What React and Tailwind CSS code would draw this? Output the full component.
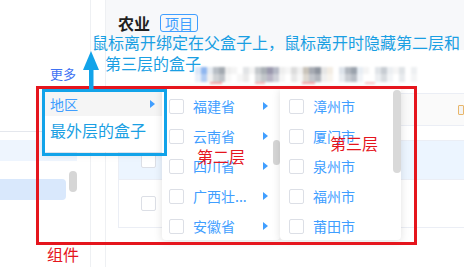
import React from "react";

const PROVINCES = ["福建省", "云南省", "四川省", "广西壮...", "安徽省"];
const CITIES = ["漳州市", "厦门市", "泉州市", "福州市", "莆田市"];

// blurred strip under the title
const MOSAIC_TOP = [
  "bg-[#dbe7f8]", "bg-[#8fb6ef]", "bg-[#e6ebf1]", "bg-[#b8bec5]", "bg-[#a3a9b0]", "bg-[#eeeeee]",
  "bg-[#f4f4f4]", "bg-[#ffffff]", "bg-[#e2e4e6]", "bg-[#f4f4f4]", "bg-[#c4c8cc]", "bg-[#aab0b6]",
  "bg-[#9a98ad]", "bg-[#b5b9c6]", "bg-[#eeeeee]", "bg-[#f6f6f6]", "bg-[#dcdcdc]", "bg-[#f0f0f0]",
  "bg-[#c9c3ba]", "bg-[#a6aab2]", "bg-[#8e949e]", "bg-[#e6e6e6]", "bg-[#f3ede4]", "bg-[#ffffff]",
  "bg-[#dde3ea]", "bg-[#b0b6be]", "bg-[#9aa2ac]", "bg-[#e8eef4]", "bg-[#f4f4f4]", "bg-[#ffffff]",
  "bg-[#e0e4e8]", "bg-[#c7ccd2]", "bg-[#eceff2]", "bg-[#f5f5f5]", "bg-[#dfe3e6]", "bg-[#ffffff]",
  "bg-[#eef0f2]",
];
const MOSAIC_BOTTOM = [
  "bg-[#e9f0fa]", "bg-[#b3cdf3]", "bg-[#f1f1f1]", "bg-[#cfd2d5]", "bg-[#bfc3c8]", "bg-[#f7f7f7]",
  "bg-[#ffffff]", "bg-[#f6f6f6]", "bg-[#ebebeb]", "bg-[#ffffff]", "bg-[#d8dadc]", "bg-[#c2c6ca]",
  "bg-[#b9b6c6]", "bg-[#cfd1d9]", "bg-[#f6f6f6]", "bg-[#ffffff]", "bg-[#e8e8e8]", "bg-[#f7f7f7]",
  "bg-[#ddd8d0]", "bg-[#c3c6cc]", "bg-[#b2b6bd]", "bg-[#f0f0f0]", "bg-[#f8f4ee]", "bg-[#ffffff]",
  "bg-[#e9edf1]", "bg-[#c9cdd3]", "bg-[#b8bec6]", "bg-[#f0f3f7]", "bg-[#ffffff]", "bg-[#ffffff]",
  "bg-[#eceff2]", "bg-[#d8dce0]", "bg-[#f3f5f7]", "bg-[#ffffff]", "bg-[#e8ebee]", "bg-[#ffffff]",
  "bg-[#f4f5f6]",
];

function Caret() {
  return (
    <svg width="5" height="8" viewBox="0 0 5 8" className="shrink-0">
      <path d="M0 0 L5 4 L0 8 Z" fill="#409eff" />
    </svg>
  );
}

function Box() {
  return <span className="h-[15px] w-[15px] shrink-0 rounded-[2px] border border-[#dcdfe6] bg-white" />;
}

export default function App() {
  return (
    <div className="relative h-[267px] w-[464px] overflow-hidden bg-white font-['Noto_Sans_CJK_SC','Noto_Sans',sans-serif]">
      {/* page underneath */}
      <div className="flex h-full">
        <aside className="relative w-[91px] shrink-0 border-r border-[#eef0f3]">
          <div className="h-[132px] border-b border-[#e4e7ed] pl-[50px] pt-[67px] text-[13px] leading-none text-[#3f72f3]">
            更多
          </div>
          <div className="mt-[8px] h-[21px] w-[77px] bg-[#eef5fe]" />
          <div className="mt-[18px] h-[21px] w-[66px] rounded-r-[4px] bg-[#d9e8fc]" />
          <div className="absolute left-[69px] top-[171px] h-[21px] w-[8px] rounded-full bg-[#d6d6d6]" />
        </aside>
        <div className="w-[15px] shrink-0 border-r border-[#eef0f3]" />

        <main className="min-w-0 flex-1">
          <div className="flex h-[50px] items-start gap-[10px] bg-[#f7f8fa] pl-[12px] pt-[14px]">
            <span className="text-[16px] font-bold leading-[18px] text-[#1f1f1f]">农业</span>
            <span className="h-[18px] rounded-[3px] border border-[#409eff] px-[4px] text-[14px] leading-[16px] text-[#409eff]">
              项目
            </span>
          </div>

          <div className="h-[43px] pl-[89px] pt-[17px]">
            <div className="blur-[1px]">
              <div className="flex">
                {MOSAIC_TOP.map((c, i) => (
                  <span key={i} className={`h-[7px] w-[6px] ${c}`} />
                ))}
              </div>
              <div className="flex">
                {MOSAIC_BOTTOM.map((c, i) => (
                  <span key={i} className={`h-[8px] w-[6px] ${c}`} />
                ))}
              </div>
              <div className="flex h-[2px]">
                <span className="ml-[15px] w-[12px] bg-[#f3a5a8]" />
                <span className="ml-[33px] w-[10px] bg-[#f6b9bb]" />
                <span className="ml-[37px] w-[13px] bg-[#f3a5a8]" />
                <span className="ml-[50px] w-[10px] bg-[#f6c4c5]" />
              </div>
            </div>
          </div>

          <div className="ml-[12px] border-l border-[#ebeef5]">
            <div className="flex h-[33px] items-center border-y border-[#ebeef5] bg-[#fafafa] pl-[339px]">
              <span className="h-[10px] w-[10px] rounded-[1px] border border-[#e8b66a] bg-[#f3f3f3]" />
            </div>
            <div className="h-[15px] border-b border-[#ebeef5]" />
            <div className="flex h-[39px] items-center border-b border-[#ebeef5] bg-[#ecf5ff] pl-[22px]">
              <Box />
            </div>
            <div className="flex h-[48px] items-center border-b border-[#ebeef5] pl-[22px]">
              <Box />
            </div>
          </div>
        </main>
      </div>

      {/* cascader panels */}
      <div className="absolute left-[44px] top-[88px] flex items-start">
        <div className="mt-[3px] h-[61px] w-[118px] bg-white shadow-[0_2px_8px_rgba(0,0,0,0.12)]">
          <div className="flex h-[25px] items-center justify-between bg-[#f5f5f5] pl-[6px] pr-[7px] text-[14px] leading-none text-[#409eff]">
            地区
            <Caret />
          </div>
        </div>
        <div className="relative h-[152px] w-[118px] rounded-b-[4px] bg-white pt-[3px] shadow-[0_2px_8px_rgba(0,0,0,0.12)]">
          {PROVINCES.map((p) => (
            <div key={p} className="flex h-[30px] items-center pl-[7px] pr-[12px]">
              <Box />
              <span className="ml-[9px] flex-1 text-[14px] leading-none text-[#409eff]">{p}</span>
              <Caret />
            </div>
          ))}
          <div className="absolute right-0 top-[52px] h-[25px] w-[7px] rounded-full bg-[#d6d6d6]" />
        </div>
        <div className="relative h-[152px] w-[121px] rounded-b-[4px] bg-white pt-[3px] shadow-[0_2px_8px_rgba(0,0,0,0.12)]">
          {CITIES.map((c) => (
            <div key={c} className="flex h-[30px] items-center pl-[9px]">
              <Box />
              <span className="ml-[9px] text-[14px] leading-none text-[#409eff]">{c}</span>
            </div>
          ))}
          <div className="absolute right-0 top-[2px] h-[83px] w-[8px] rounded-full bg-[#d9d9d9]" />
        </div>
      </div>

      {/* annotations */}
      <div className="absolute left-[36px] top-[86px] h-[159px] w-[381px] border-[3px] border-[#e5151d]" />
      <div className="absolute left-[42px] top-[89px] h-[67px] w-[125px] border-[3px] border-[#12a3e9]" />
      <svg className="absolute left-[83px] top-[51px]" width="16" height="40" viewBox="0 0 16 40">
        <path d="M8 0 L16 19 L0 19 Z" fill="#12a3e9" />
        <rect x="6" y="17" width="4.5" height="23" fill="#12a3e9" />
      </svg>

      <div className="absolute left-[92px] top-[34px] whitespace-nowrap text-[16px] leading-none text-[#1a9fe3]">
        鼠标离开绑定在父盒子上，鼠标离开时隐藏第二层和
      </div>
      <div className="absolute left-[105px] top-[55px] whitespace-nowrap text-[16px] leading-none text-[#1a9fe3]">
        第三层的盒子
      </div>
      <div className="absolute left-[50px] top-[122px] whitespace-nowrap text-[16px] leading-none text-[#1a9fe3]">
        最外层的盒子
      </div>
      <div className="absolute left-[197px] top-[148px] text-[16px] leading-none text-[#e5151d]">第二层</div>
      <div className="absolute left-[330px] top-[135px] text-[16px] leading-none text-[#e5151d]">第三层</div>
      <div className="absolute left-[47px] top-[246px] text-[16px] leading-none text-[#e5151d]">组件</div>
    </div>
  );
}
